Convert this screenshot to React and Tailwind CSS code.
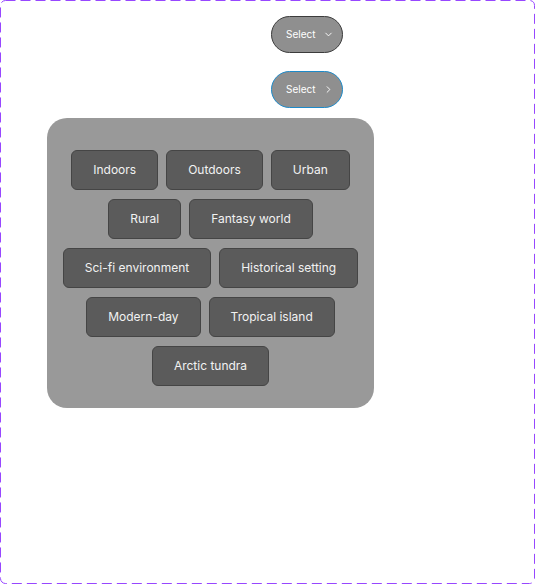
import { ChevronDown, ChevronRight } from "lucide-react";

const rows = [
  ["Indoors", "Outdoors", "Urban"],
  ["Rural", "Fantasy world"],
  ["Sci-fi environment", "Historical setting"],
  ["Modern-day", "Tropical island"],
  ["Arctic tundra"],
];

const SelectButton = ({ open, focused }) => (
  <button
    className={`flex items-center gap-[8px] h-[37px] w-[72px] pl-[14px] rounded-full bg-[#8f8f8f] text-[10px] text-white border ${
      focused ? "border-[#1d8ac9]" : "border-[#3c3c3c]"
    }`}
  >
    <span>Select</span>
    {open ? (
      <ChevronDown className="w-[11px] h-[11px]" strokeWidth={2} />
    ) : (
      <ChevronRight className="w-[11px] h-[11px]" strokeWidth={2} />
    )}
  </button>
);

const Chip = ({ label }) => (
  <div className="h-10 flex items-center px-[21px] rounded-md bg-[#5b5b5b] border border-[#454545] text-[12px] text-[#f2f2f2]">
    {label}
  </div>
);

export default function App() {
  return (
    <div
      className="relative w-[535px] h-[584px] bg-white"
      style={{ fontFamily: "Inter, 'Noto Sans', sans-serif" }}
    >
      <svg className="absolute inset-0 pointer-events-none" width="535" height="584">
        <rect
          x="0.5"
          y="0.5"
          width="534"
          height="583"
          rx="5"
          fill="none"
          stroke="#9747ff"
          strokeWidth="1"
          strokeDasharray="10 5"
        />
      </svg>

      <div className="flex flex-col items-start pl-[271px] pt-[16px] gap-[18px]">
        <SelectButton open />
        <SelectButton focused />
      </div>

      <div className="ml-[47px] mt-[10px] w-[327px] h-[290px] rounded-[20px] bg-[#999999] pt-[32px] flex flex-col gap-[9px]">
        {rows.map((row, i) => (
          <div key={i} className="flex justify-center gap-2">
            {row.map((label) => (
              <Chip key={label} label={label} />
            ))}
          </div>
        ))}
      </div>
    </div>
  );
}
